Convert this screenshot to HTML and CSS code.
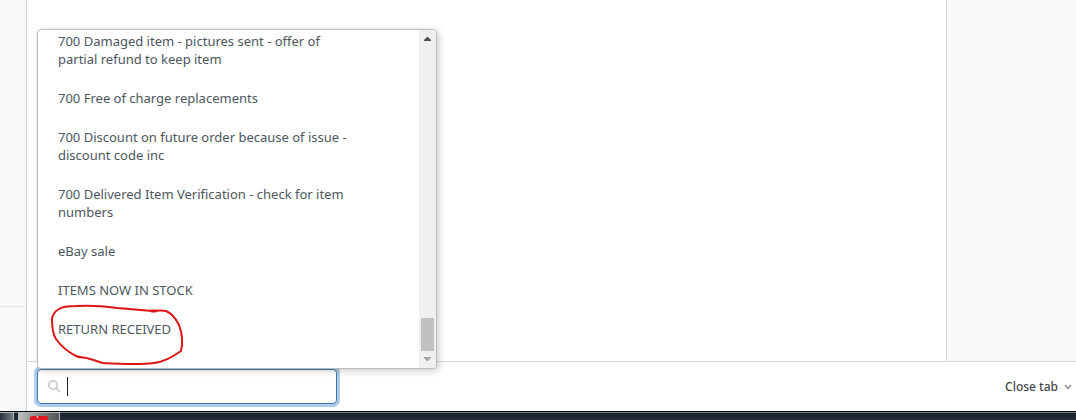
FILE: index.html
```html
<!DOCTYPE html>
<html lang="en">
<head>
<meta charset="utf-8">
<title>Ticket macros</title>
<link rel="stylesheet" href="styles.css">
</head>
<body>
<div class="app">
  <aside class="rail"><div class="rail-top"></div><div class="rail-bottom"></div></aside>
  <div class="workspace">
    <div class="panes">
      <main class="pane"></main>
      <aside class="side"></aside>
    </div>
    <footer class="toolbar">
      <div class="search">
        <div class="menu">
          <ul class="options">
            <li>700 Damaged item - pictures sent - offer of partial refund to keep item</li>
            <li>700 Free of charge replacements</li>
            <li>700 Discount on future order because of issue - discount code inc</li>
            <li>700 Delivered Item Verification - check for item numbers</li>
            <li>eBay sale</li>
            <li>ITEMS NOW IN STOCK</li>
            <li>RETURN RECEIVED</li>
          </ul>
          <div class="scrollbar">
            <svg class="arrow" viewBox="0 0 7 4"><path d="M0 4V3L3 0H4L7 3V4Z" fill="#505050"/></svg>
            <div class="thumb"></div>
            <svg class="arrow" viewBox="0 0 7 4"><path d="M0 0V1L3 4H4L7 1V0Z" fill="#a3a3a3"/></svg>
          </div>
          <svg class="marker" viewBox="0 0 136 64" fill="none" stroke="#dc1414" stroke-width="2" stroke-linecap="round" stroke-linejoin="round">
            <path d="M104 8C89 7 80 6 67 5C53 3 40 2 26 3C19 3 12 4 9 6C4 9 2 12 2 17C2 25 3 31 6 36C11 43 18 49 26 53C30 55 36 54 40 56C45 57 48 59 53 60C70 61 89 62 104 60C114 59 122 54 131 48C133 40 132 30 129 22C126 16 121 10 116 8C111 7 107 8 101 8"/>
            <path d="M102 8H105" stroke-width="3"/>
          </svg>
        </div>
        <svg class="glass" viewBox="0 0 13 13" fill="none" stroke="#c4c4c4" stroke-width="1.5"><circle cx="5" cy="5" r="4.2"/><path d="M8 8L12 12"/></svg>
        <input class="field" type="text" aria-label="Search macros">
        <span class="caret"></span>
      </div>
      <button class="close" type="button">Close tab
        <svg class="chevron" viewBox="0 0 8 6" fill="none" stroke="#8c8f92" stroke-width="1.5"><path d="M1 1L4 4.5L7 1"/></svg>
      </button>
    </footer>
  </div>
</div>
<div class="taskbar">
  <div class="task task-first"></div>
  <div class="task task-app"><svg class="badge" viewBox="0 0 18 4"><path d="M0 4V1Q1 0 3 0H15Q17 0 18 1V4Z" fill="#e01820"/><path d="M7 0L8 2" stroke="#fff" fill="none"/></svg></div>
</div>
</body>
</html>
```
FILE: styles.css
```css
* { box-sizing: border-box; }
body {
  margin: 0;
  height: 100vh;
  display: flex;
  flex-direction: column;
  overflow: hidden;
  background: #fff;
  color: #4b565e;
  font: 13px/18px "Noto Sans", "Open Sans", sans-serif;
}
.app { flex: 1; display: flex; min-height: 0; }
.rail {
  width: 27px;
  display: flex;
  flex-direction: column;
  background: #f8f8f8;
  border-right: 1px solid #d4d4d4;
}
.rail-top { flex: 1; border-bottom: 1px solid #e4e4e4; }
.rail-bottom { height: 104px; }
.workspace { flex: 1; display: flex; flex-direction: column; }
.panes { flex: 1; display: flex; }
.pane { flex: 1; }
.side { width: 130px; background: #f8f8f8; border-left: 1px solid #d8d8d8; }
.toolbar {
  display: flex;
  align-items: center;
  justify-content: space-between;
  height: 50px;
  padding: 0 4px 0 10px;
  border-top: 1px solid #d8d8d8;
}
.search { position: relative; width: 300px; }
.field {
  display: block;
  width: 100%;
  height: 35px;
  padding: 0 12px 0 30px;
  border: 1px solid #3c78ac;
  border-radius: 4px;
  outline: none;
  box-shadow: 0 0 0 3px #accdea;
  background: #fff;
  color: inherit;
  font: inherit;
}
.glass { position: absolute; left: 11px; top: 11px; width: 13px; height: 13px; }
.caret { position: absolute; left: 30px; top: 8px; width: 1px; height: 19px; background: #222; }
.menu {
  position: absolute;
  left: 0;
  bottom: 35px;
  z-index: 2;
  display: flex;
  width: 400px;
  height: 340px;
  border: 1px solid #bcbcbc;
  border-radius: 4px;
  background: #fff;
  box-shadow: 2px 2px 7px rgba(0, 0, 0, .2);
}
.options {
  flex: 1;
  margin: 0;
  padding: 2px 60px 0 20px;
  list-style: none;
  overflow: hidden;
}
.options li { padding-bottom: 21px; }
.scrollbar {
  display: flex;
  flex-direction: column;
  align-items: center;
  width: 17px;
  padding: 7px 0;
  background: #f0f0f0;
  border-radius: 0 3px 3px 0;
}
.arrow { width: 7px; height: 4px; }
.thumb { width: 13px; height: 33px; margin: auto 0 6px; background: #c1c1c1; }
.marker { position: absolute; left: 12px; bottom: 1px; width: 136px; height: 64px; }
.close {
  display: flex;
  align-items: center;
  gap: 6px;
  padding: 0;
  border: 0;
  background: none;
  color: #42474c;
  font: 500 12px/18px "Noto Sans", "Open Sans", sans-serif;
}
.chevron { width: 8px; height: 6px; }
.taskbar {
  display: flex;
  gap: 4px;
  height: 9px;
  border-top: 1px solid #050a0c;
  background: linear-gradient(#75868a 0 1px, #18222c 1px, #222c3b);
}
.task { border: 1px solid #b4b8b8; border-bottom: 0; border-left-width: 0; }
.task-first { width: 14px; background: linear-gradient(90deg, #26323f, #747b80); }
.task-app {
  display: flex;
  align-items: flex-end;
  justify-content: center;
  width: 42px;
  border-left-width: 1px;
  background: linear-gradient(100deg, #c0c0c0, #777 60%, #505456);
}
.badge { width: 18px; height: 4px; }
```
